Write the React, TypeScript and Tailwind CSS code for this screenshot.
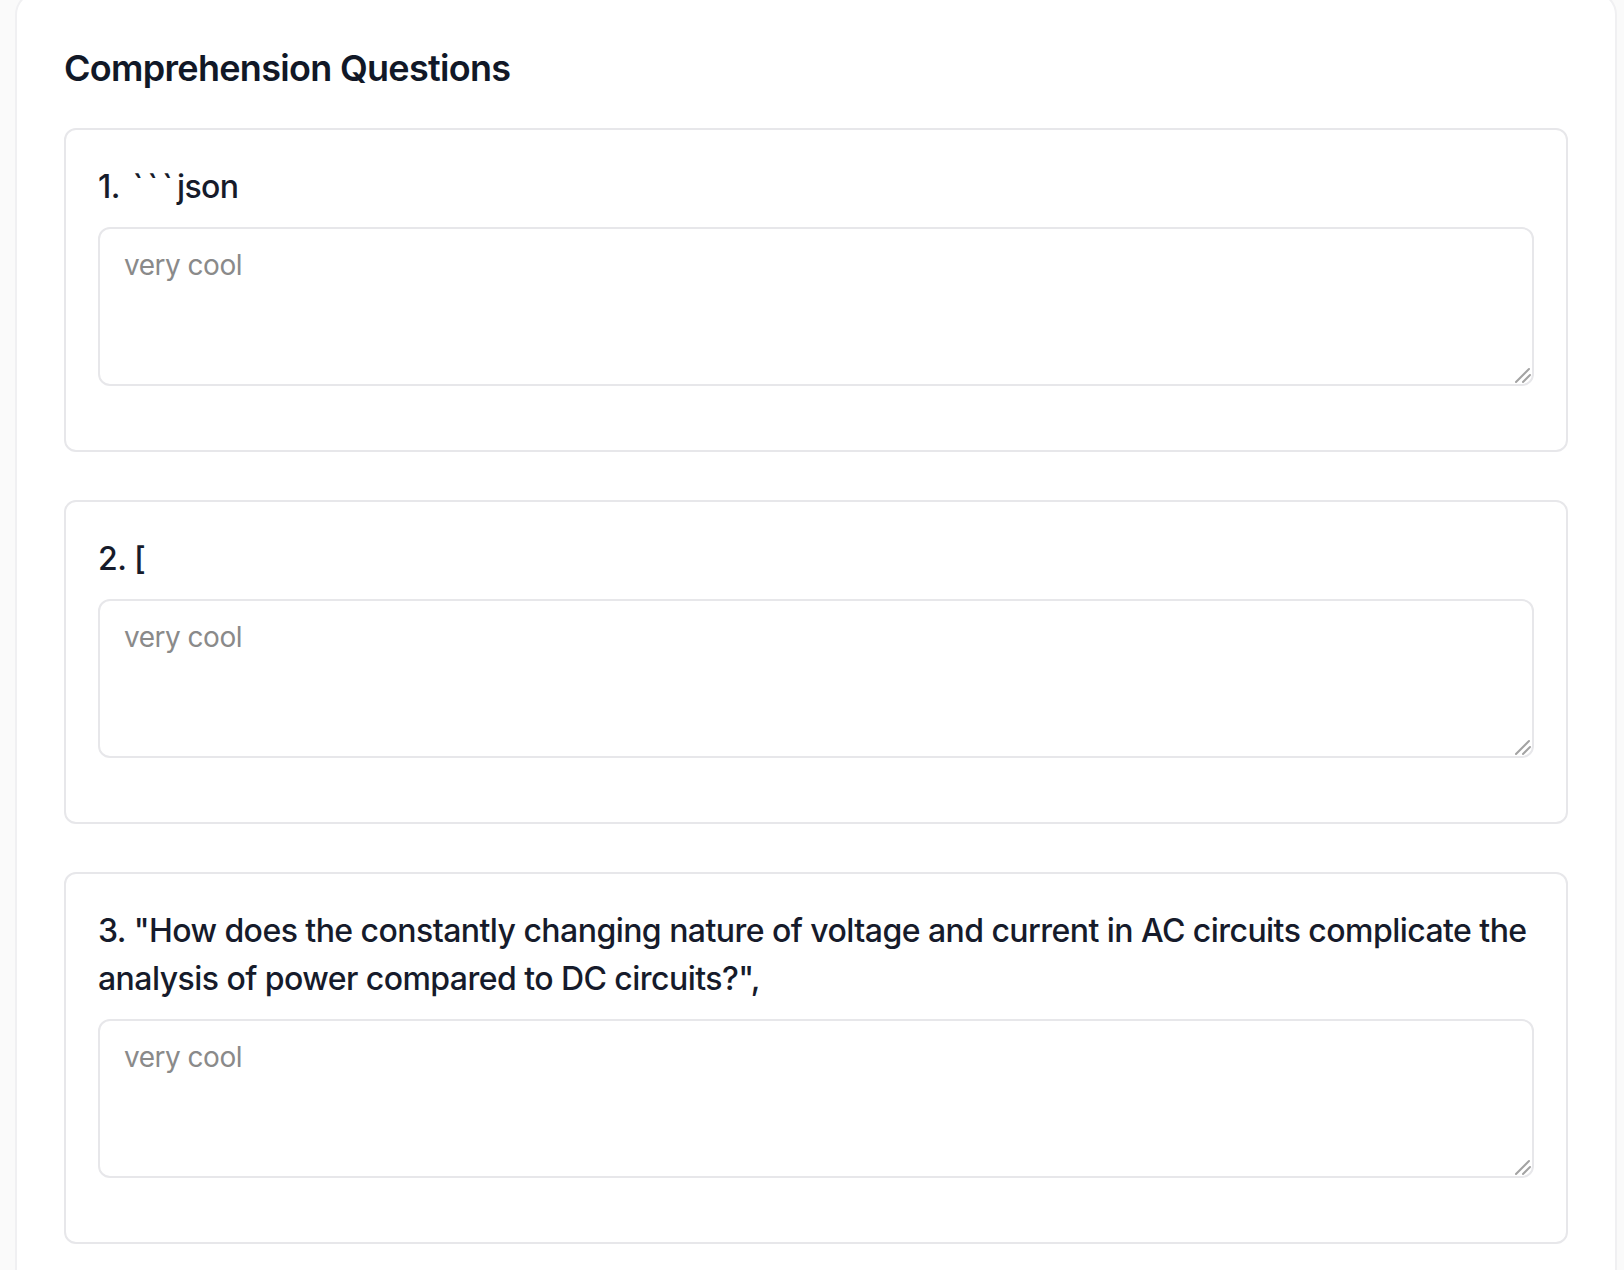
import React from 'react';

const questions = [
  '```json',
  '[',
  '"How does the constantly changing nature of voltage and current in AC circuits complicate the analysis of power compared to DC circuits?",',
];

// backticks look cramped in Inter, space them out a bit
const renderText = (text: string) =>
  text.split(/(`+)/).map((part, i) =>
    part.startsWith('`') ? (
      <span key={i} className="ml-[5px] tracking-[4px]">
        {part}
      </span>
    ) : (
      <React.Fragment key={i}>{part}</React.Fragment>
    )
  );

const ResizeGrip = () => (
  <svg
    className="pointer-events-none absolute right-[2px] bottom-[2px]"
    width="18"
    height="18"
    viewBox="0 0 18 18"
  >
    <line x1="2" y1="16" x2="15" y2="3" stroke="#a3a3a3" strokeWidth="2" strokeLinecap="round" />
    <line x1="9" y1="16" x2="16" y2="9" stroke="#a3a3a3" strokeWidth="2" strokeLinecap="round" />
  </svg>
);

const QuestionCard = ({ index, text }: { index: number; text: string }) => {
  const [answer, setAnswer] = React.useState('');

  return (
    <div className="rounded-[12px] border-2 border-[#e7e7ea] bg-white px-[32px] pt-[33px] pb-[64px]">
      <p className="mb-[16px] text-[32px] leading-[48px] font-medium tracking-[-0.55px] text-[#161b2b]">
        {index + 1}. {renderText(text)}
      </p>
      <div className="relative">
        <textarea
          value={answer}
          onChange={(e) => setAnswer(e.target.value)}
          placeholder="very cool"
          className="block h-[159px] w-full resize-none rounded-[12px] border-2 border-[#e7e7ea] bg-white px-[24px] py-[16px] text-[28px] leading-[40px] tracking-[-0.5px] text-[#161b2b] placeholder:text-[#8a8a8a] outline-none"
        />
        <ResizeGrip />
      </div>
    </div>
  );
};

const App = () => {
  return (
    <div
      className="h-[1270px] overflow-hidden bg-[#fafafa] pl-[15px] pr-[7px]"
      style={{ fontFamily: 'Inter, "Noto Sans", sans-serif' }}
    >
      <div className="mt-[-9px] rounded-[24px] border-2 border-[#f0f0f2] bg-white p-[47px]">
        <h2 className="mb-[32px] text-[36px] leading-[56px] font-semibold tracking-[-0.7px] text-[#111827]">
          Comprehension Questions
        </h2>
        <div className="flex flex-col gap-[48px]">
          {questions.map((q, i) => (
            <QuestionCard key={i} index={i} text={q} />
          ))}
        </div>
      </div>
    </div>
  );
};

export default App;
